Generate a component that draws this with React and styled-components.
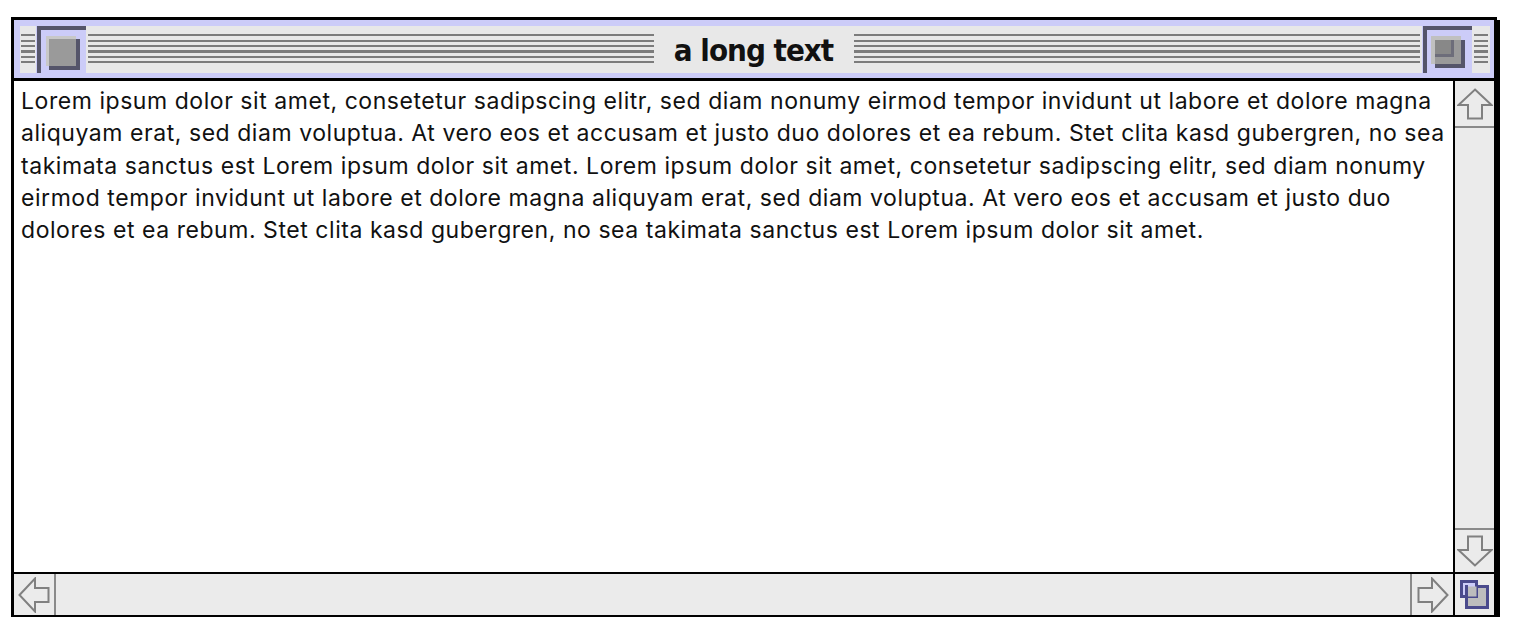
import React from "react";
import styled, { createGlobalStyle } from "styled-components";

const Global = createGlobalStyle`
  html, body { margin: 0; padding: 0; background: #ffffff; }
  body { font-family: "Liberation Sans", Arial, sans-serif; }
`;

const Page = styled.div`
  padding: 17px 0 0 11px;
`;

const Window = styled.div`
  width: 1480px;
  height: 595px;
  border: 3px solid #000;
  border-bottom-width: 2px;
  box-shadow: 3px 3px 0 #000;
  background: #fff;
  display: flex;
  flex-direction: column;
`;

const TitleBar = styled.div`
  flex: 0 0 61px;
  box-sizing: border-box;
  background: #ccccf8;
  padding: 6px 4px 5px 6px;
  border-bottom: 3px solid #000;
  display: flex;
`;

const Band = styled.div`
  flex: 1;
  background: #e8e8e8;
  display: flex;
  align-items: center;
`;

const Stripes = styled.div`
  flex: ${(p) => (p.$fixed ? `0 0 ${p.$fixed}px` : "1")};
  height: 32px;
  margin: 0 ${(p) => p.$mx || 2}px;
  background: repeating-linear-gradient(
    to bottom,
    #7c7c7c 0px,
    #7c7c7c 2px,
    transparent 2px,
    transparent 5.5px
  );
`;

const BoxButton = styled.div`
  position: relative;
  flex: 0 0 50px;
  align-self: stretch;
  background: #ccccf8;
  box-sizing: border-box;
`;

const BoxFrame = styled.div`
  position: absolute;
  left: 1px;
  top: 0px;
  right: 0;
  bottom: 0;
  border-top: 4px solid #55556a;
  border-left: 4px solid #55556a;
`;

const CloseInner = styled.div`
  position: absolute;
  left: 10px;
  top: 10px;
  width: 30px;
  height: 30px;
  background: #c8c8c8;
`;

const CloseFill = styled.div`
  position: absolute;
  left: 3px;
  top: 3px;
  width: 27px;
  height: 27px;
  background: #9a9a9a;
  border-right: 4px solid #55556a;
  border-bottom: 4px solid #55556a;
`;

const ZoomBack = styled.div`
  position: absolute;
  left: 9px;
  top: 10px;
  width: 30px;
  height: 28px;
  background: #c0c0c0;
`;

const ZoomFront = styled.div`
  position: absolute;
  left: 13px;
  top: 14px;
  width: 26px;
  height: 24px;
  background: #9a9a9a;
  border-right: 4px solid #55556a;
  border-bottom: 4px solid #55556a;
`;

const ZoomSmall = styled.div`
  position: absolute;
  left: 13px;
  top: 14px;
  width: 16px;
  height: 14px;
  background: #888;
  border-right: 3px solid #6d6d7a;
  border-bottom: 3px solid #6d6d7a;
`;

const Title = styled.div`
  flex: 0 0 auto;
  padding: 0 19px 0 18px;
  font-family: "DejaVu Sans Condensed", "DejaVu Sans", sans-serif;
  font-weight: bold;
  font-size: 31px;
  letter-spacing: -1px;
  color: #111;
  line-height: 1;
  margin-top: 1px;
`;

const Body = styled.div`
  flex: 1;
  display: flex;
  min-height: 0;
`;

const TextArea = styled.div`
  flex: 1;
  padding: 4px 7px;
  font-family: Inter, "Liberation Sans", Arial, sans-serif;
  font-size: 23px;
  letter-spacing: 0.55px;
  line-height: 32.3px;
  color: #111;
  white-space: nowrap;
  overflow: hidden;
`;

const VScroll = styled.div`
  flex: 0 0 39px;
  border-left: 2px solid #000;
  background: #ebebeb;
  display: flex;
  flex-direction: column;
  justify-content: space-between;
`;

const ArrowBox = styled.div`
  display: flex;
  align-items: center;
  justify-content: center;
  box-sizing: border-box;
  ${(p) => p.$vertical && `height: ${p.$h || 46}px;`}
  ${(p) => !p.$vertical && `width: ${p.$w || 40}px;`}
  ${(p) => p.$edge && `border-${p.$edge}: 2px solid #8a8a8a;`}
`;

const HBar = styled.div`
  flex: 0 0 41px;
  border-top: 2px solid #000;
  display: flex;
`;

const HScroll = styled.div`
  flex: 1;
  background: #ebebeb;
  display: flex;
  justify-content: space-between;
`;

const GrowBox = styled.div`
  flex: 0 0 39px;
  border-left: 2px solid #000;
  background: #ebebeb;
  display: flex;
  align-items: center;
  justify-content: center;
`;

const Arrow = ({ dir }) => {
  const rot = { up: 0, down: 180, left: -90, right: 90 }[dir];
  const vertical = dir === "up" || dir === "down";
  const w = vertical ? 36 : 32;
  const h = vertical ? 32 : 36;
  return (
    <svg width={w} height={h} viewBox={`0 0 ${w} ${h}`}>
      <g transform={`translate(${w / 2} ${h / 2}) rotate(${rot}) translate(-18 -16)`}>
        <polygon
          points="18,1.5 34.5,17 25,17 25,30.5 11,30.5 11,17 1.5,17"
          fill="none"
          stroke="#808080"
          strokeWidth="2"
          strokeLinejoin="miter"
        />
      </g>
    </svg>
  );
};

const GrowIcon = () => (
  <svg width="30" height="30" viewBox="0 0 30 30">
    <rect x="6.5" y="6.5" width="21" height="21" fill="#bdbdbd" stroke="#4a4a8c" strokeWidth="3" />
    <rect x="1.5" y="1.5" width="15" height="15" fill="#ccccf8" stroke="#4a4a8c" strokeWidth="3" />
    <rect x="6.5" y="6.5" width="10" height="10" fill="#bdbdbd" />
    <line x1="6.5" y1="5" x2="6.5" y2="29" stroke="#4a4a8c" strokeWidth="3" />
  </svg>
);

const lines = [
  "Lorem ipsum dolor sit amet, consetetur sadipscing elitr, sed diam nonumy eirmod tempor invidunt ut labore et dolore magna",
  "aliquyam erat, sed diam voluptua. At vero eos et accusam et justo duo dolores et ea rebum. Stet clita kasd gubergren, no sea",
  "takimata sanctus est Lorem ipsum dolor sit amet. Lorem ipsum dolor sit amet, consetetur sadipscing elitr, sed diam nonumy",
  "eirmod tempor invidunt ut labore et dolore magna aliquyam erat, sed diam voluptua. At vero eos et accusam et justo duo",
  "dolores et ea rebum. Stet clita kasd gubergren, no sea takimata sanctus est Lorem ipsum dolor sit amet.",
];

export default function App() {
  return (
    <>
      <Global />
      <Page>
        <Window>
          <TitleBar>
            <Band>
              <Stripes $fixed={14} $mx={1} />
              <BoxButton>
                <BoxFrame />
                <CloseInner>
                  <CloseFill />
                </CloseInner>
              </BoxButton>
              <Stripes $mx={2} />
              <Title>a long text</Title>
              <Stripes $mx={2} />
              <BoxButton>
                <BoxFrame />
                <ZoomBack />
                <ZoomFront />
                <ZoomSmall />
              </BoxButton>
              <Stripes $fixed={14} $mx={2} />
            </Band>
          </TitleBar>
          <Body>
            <TextArea>
              {lines.map((l, i) => (
                <React.Fragment key={i}>
                  {l}
                  {i < lines.length - 1 && <br />}
                </React.Fragment>
              ))}
            </TextArea>
            <VScroll>
              <ArrowBox $vertical $h={47} $edge="bottom">
                <Arrow dir="up" />
              </ArrowBox>
              <ArrowBox $vertical $h={44} $edge="top">
                <Arrow dir="down" />
              </ArrowBox>
            </VScroll>
          </Body>
          <HBar>
            <HScroll>
              <ArrowBox $w={42} $edge="right">
                <Arrow dir="left" />
              </ArrowBox>
              <ArrowBox $w={43} $edge="left">
                <Arrow dir="right" />
              </ArrowBox>
            </HScroll>
            <GrowBox>
              <GrowIcon />
            </GrowBox>
          </HBar>
        </Window>
      </Page>
    </>
  );
}
